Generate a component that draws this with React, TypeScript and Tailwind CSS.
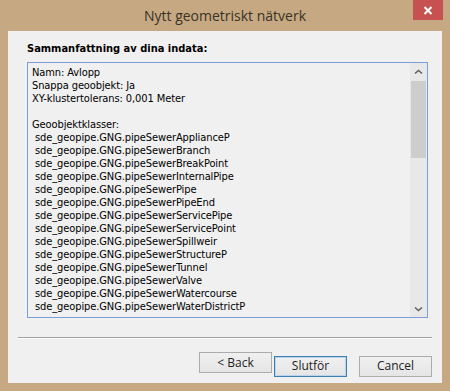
import React from "react";

const classes = [
  "ApplianceP",
  "Branch",
  "BreakPoint",
  "InternalPipe",
  "Pipe",
  "PipeEnd",
  "ServicePipe",
  "ServicePoint",
  "Spillweir",
  "StructureP",
  "Tunnel",
  "Valve",
  "Watercourse",
  "WaterDistrictP",
];

const tahoma = "font-['DejaVu_Sans_Condensed','DejaVu_Sans',sans-serif]";

function Chevron({ down }: { down?: boolean }) {
  return (
    <svg width="9" height="6" viewBox="0 0 9 6" className="block">
      <path
        d={down ? "M1 1.5 L4.5 4.5 L8 1.5" : "M1 4.5 L4.5 1.5 L8 4.5"}
        fill="none"
        stroke="#606060"
        strokeWidth="1.6"
      />
    </svg>
  );
}

function Button({ label, primary }: { label: string; primary?: boolean }) {
  return (
    <button
      type="button"
      className={`h-[21px] w-[73px] text-[12px] text-[#222] font-['Open_Sans',sans-serif] leading-none bg-gradient-to-b from-[#f0f0f0] to-[#e5e5e5] border ${
        primary ? "border-[#3c7fb1] shadow-[inset_0_0_0_1px_#b9d4ec]" : "border-[#acacac]"
      }`}
    >
      {label}
    </button>
  );
}

export default function App() {
  return (
    <div className="w-[450px] h-[391px] bg-[#c6a982] flex flex-col">
      <div className="relative h-[31px] flex items-center justify-center">
        <span className="text-[14px] text-[#3a3226] font-['Open_Sans',sans-serif] pb-[1px]">
          Nytt geometriskt nätverk
        </span>
        <div className="absolute right-[7px] top-0 w-[30px] h-[20px] bg-[#c75050] flex items-center justify-center">
          <svg width="10" height="9" viewBox="0 0 10 9">
            <path d="M1.5 1 L8.5 8 M8.5 1 L1.5 8" stroke="#fff" strokeWidth="2" />
          </svg>
        </div>
      </div>

      <div className="mx-[8px] h-[352px] bg-[#f0f0f0] flex flex-col">
        <div className={`pl-[19px] pt-[10px] h-[31px] text-[11px] font-bold text-black ${tahoma}`}>
          Sammanfattning av dina indata:
        </div>

        <div className="ml-[19px] mr-[14px] h-[256px] border border-[#7a9fd6] flex">
          <div className={`flex-1 pl-[4px] pt-[3px] text-[11px] leading-[13px] tracking-[-0.1px] text-black whitespace-pre overflow-hidden ${tahoma}`}>
            <div>Namn: Avlopp</div>
            <div>Snappa geoobjekt: Ja</div>
            <div>XY-klustertolerans: 0,001 Meter</div>
            <div>&nbsp;</div>
            <div>Geoobjektklasser:</div>
            {classes.map((c) => (
              <div key={c}> sde_geopipe.GNG.pipeSewer{c}</div>
            ))}
          </div>
          <div className="w-[17px] bg-[#e8e8e8] flex flex-col items-center">
            <div className="h-[17px] flex items-center justify-center">
              <Chevron />
            </div>
            <div className="w-[15px] h-[77px] bg-[#cdcdcd] mt-[1px]" />
            <div className="flex-1" />
            <div className="h-[17px] flex items-center justify-center">
              <Chevron down />
            </div>
          </div>
        </div>

        <div className="mx-[10px] mt-[19px] border-t border-[#a0a0a0] border-b border-b-white" />

        <div className="mt-[13px] mr-[10px] flex justify-end">
          <Button label="< Back" />
          <div className="ml-[2px]">
            <Button label="Slutför" primary />
          </div>
          <div className="ml-[12px]">
            <Button label="Cancel" />
          </div>
        </div>
      </div>
    </div>
  );
}
